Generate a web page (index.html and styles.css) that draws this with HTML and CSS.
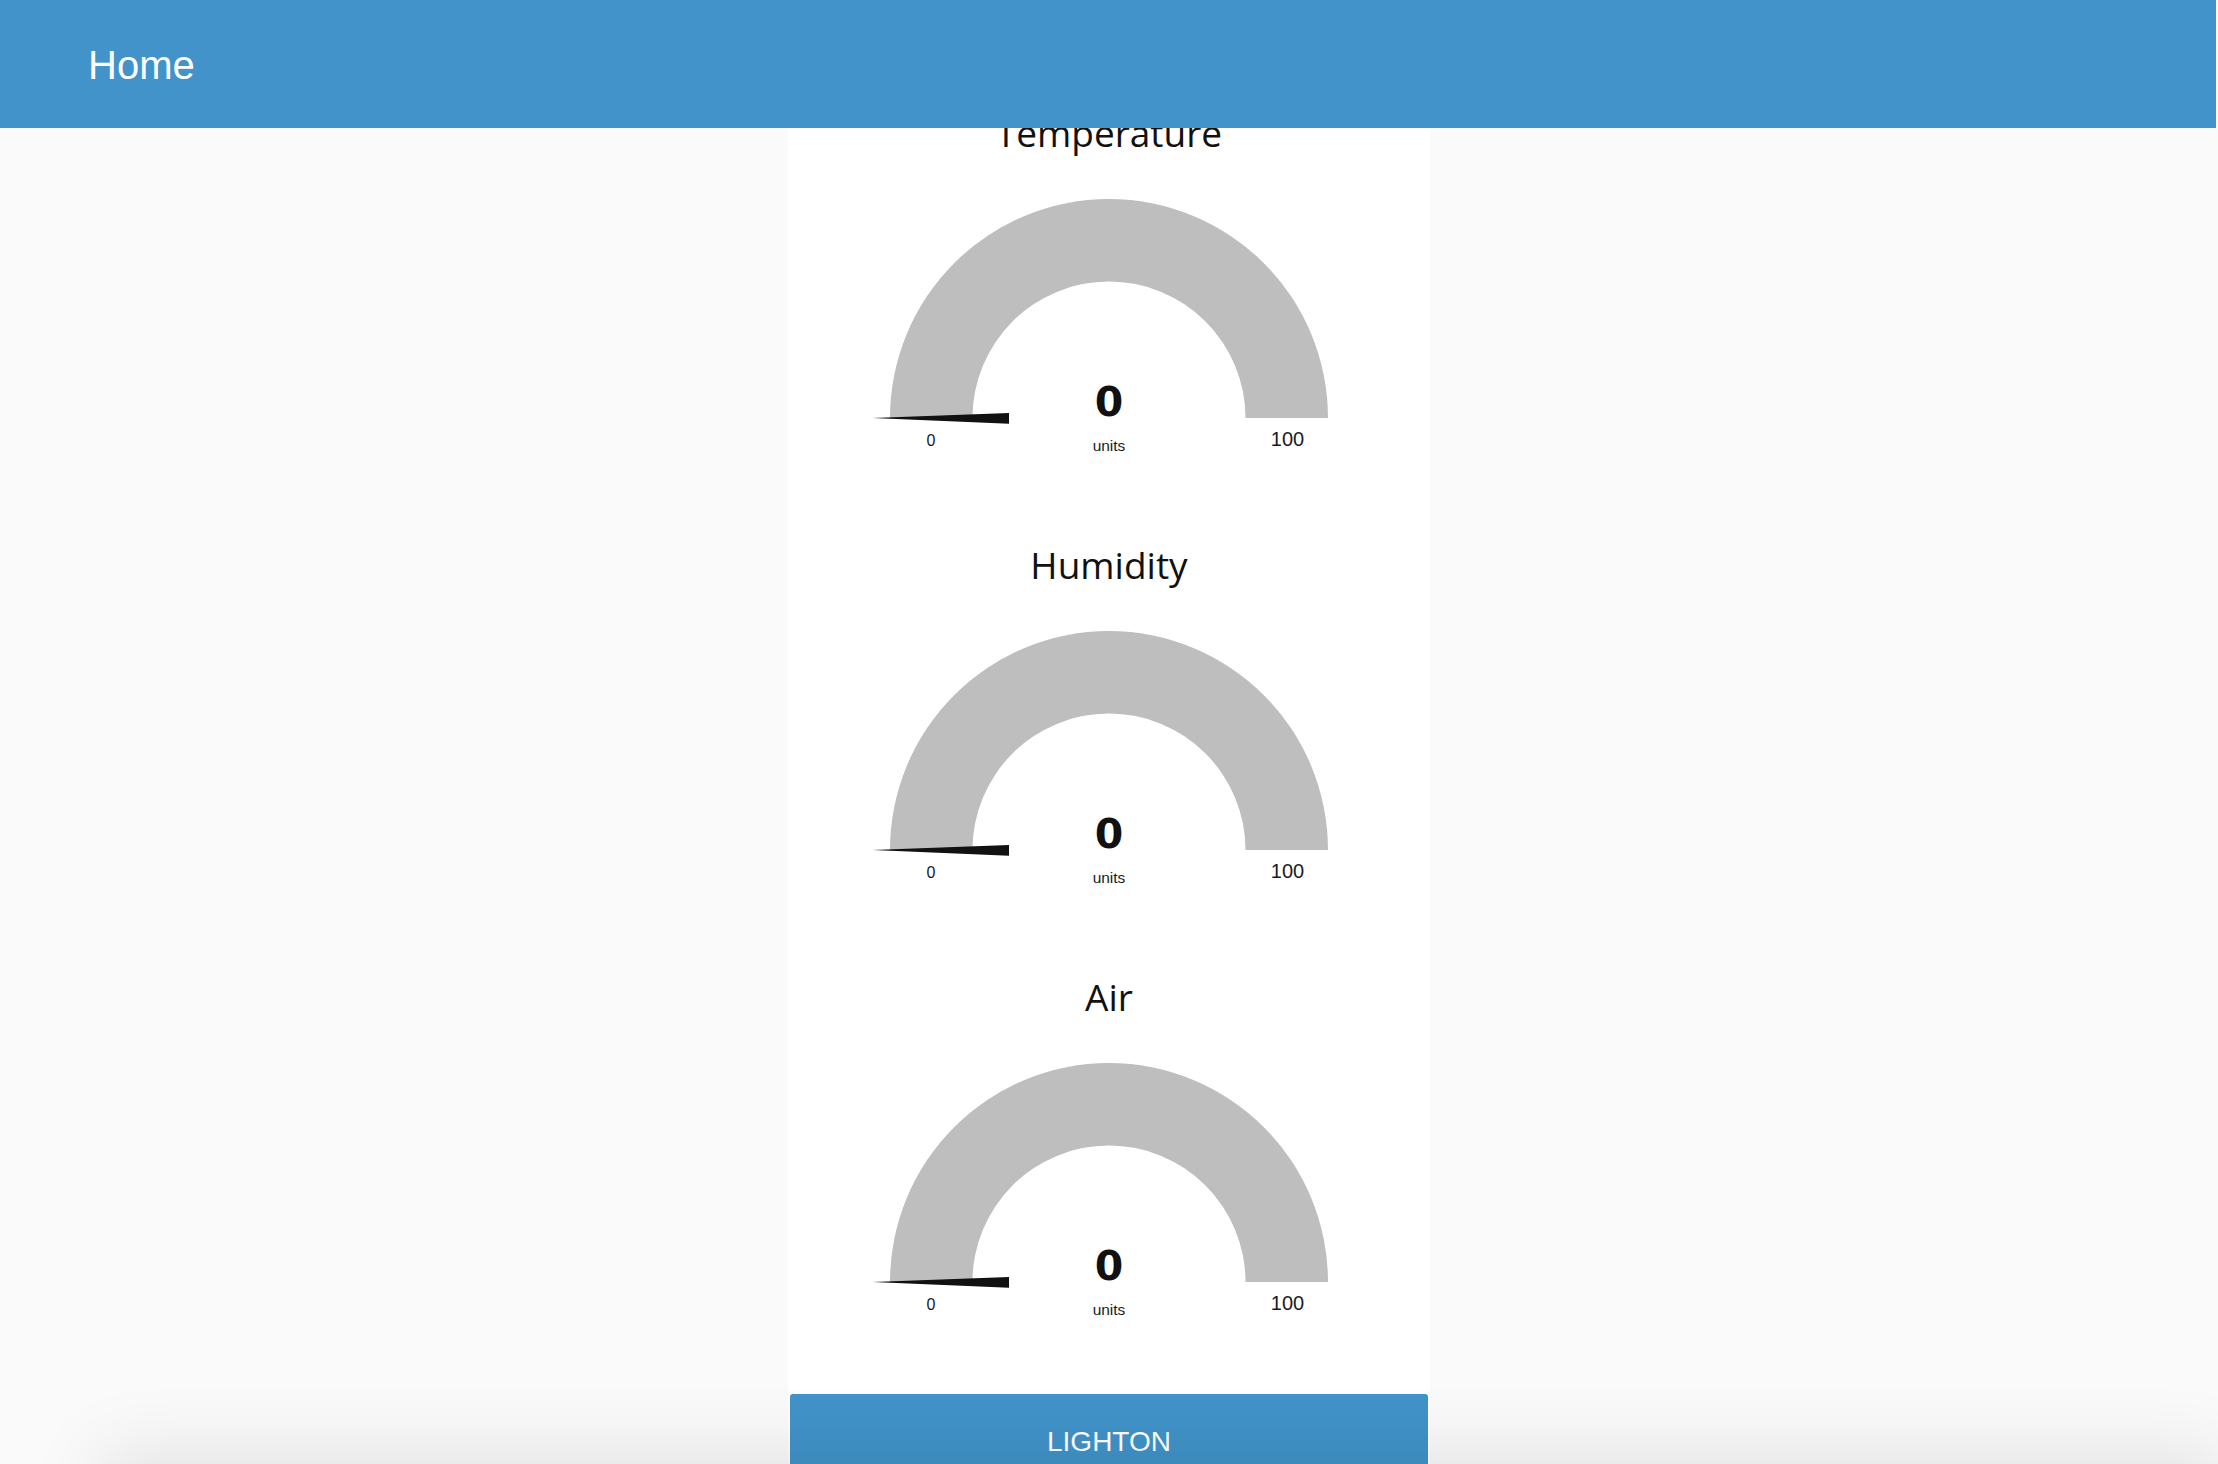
FILE: index.html
```html
<!DOCTYPE html>
<html>
<head>
<meta charset="utf-8">
<title>Home</title>
<link rel="stylesheet" href="styles.css">
</head>
<body>
<header class="topbar">
  <span class="topbar-title">Home</span>
</header>
<main class="page">
  <section class="card">
    <div class="widget">
      <div class="widget-title">Temperature</div>
      <svg class="gauge" viewBox="0 0 640 372" width="640" height="372">
        <path class="gauge-arc" d="M101 260 A219 219 0 0 1 539 260 L456.5 260 A136.5 136.5 0 0 0 183.5 260 Z"/>
        <polygon class="gauge-needle" points="83.5,260 220,255 220,265.7"/>
        <text class="gauge-value" x="320" y="257.5" text-anchor="middle">0</text>
        <text class="gauge-units" x="320" y="292.7" text-anchor="middle">units</text>
        <text class="gauge-min" x="142" y="287.7" text-anchor="middle">0</text>
        <text class="gauge-max" x="498.5" y="288" text-anchor="middle">100</text>
      </svg>
    </div>
    <div class="widget">
      <div class="widget-title">Humidity</div>
      <svg class="gauge" viewBox="0 0 640 372" width="640" height="372">
        <path class="gauge-arc" d="M101 260 A219 219 0 0 1 539 260 L456.5 260 A136.5 136.5 0 0 0 183.5 260 Z"/>
        <polygon class="gauge-needle" points="83.5,260 220,255 220,265.7"/>
        <text class="gauge-value" x="320" y="257.5" text-anchor="middle">0</text>
        <text class="gauge-units" x="320" y="292.7" text-anchor="middle">units</text>
        <text class="gauge-min" x="142" y="287.7" text-anchor="middle">0</text>
        <text class="gauge-max" x="498.5" y="288" text-anchor="middle">100</text>
      </svg>
    </div>
    <div class="widget">
      <div class="widget-title">Air</div>
      <svg class="gauge" viewBox="0 0 640 372" width="640" height="372">
        <path class="gauge-arc" d="M101 260 A219 219 0 0 1 539 260 L456.5 260 A136.5 136.5 0 0 0 183.5 260 Z"/>
        <polygon class="gauge-needle" points="83.5,260 220,255 220,265.7"/>
        <text class="gauge-value" x="320" y="257.5" text-anchor="middle">0</text>
        <text class="gauge-units" x="320" y="292.7" text-anchor="middle">units</text>
        <text class="gauge-min" x="142" y="287.7" text-anchor="middle">0</text>
        <text class="gauge-max" x="498.5" y="288" text-anchor="middle">100</text>
      </svg>
    </div>
    <button class="action-button" type="button">LIGHTON</button>
  </section>
</main>
<div class="bottom-shadow"></div>
</body>
</html>
```

FILE: styles.css
```css
html, body {
  margin: 0;
  padding: 0;
  background: #fafafa;
  overflow: hidden;
  height: 100%;
}

body {
  font-family: "Liberation Sans", Arial, sans-serif;
  color: #111;
}

.topbar {
  position: fixed;
  top: 0;
  left: 0;
  right: 2px;
  height: 128px;
  background: #4193c9;
  display: flex;
  align-items: center;
  padding: 3px 0 0 88px;
  box-sizing: border-box;
  z-index: 10;
}

.topbar-title {
  color: #fff;
  font-size: 40px;
  font-family: "Liberation Sans", Arial, sans-serif;
}

.page {
  padding-top: 90px;
  display: flex;
  justify-content: center;
}

.card {
  width: 642px;
  background: #fff;
  padding: 8px 0 0;
  display: flex;
  flex-direction: column;
  align-items: stretch;
  min-height: 1500px;
  box-sizing: border-box;
}

.widget {
  height: 432px;
  padding-top: 10px;
  box-sizing: border-box;
  display: flex;
  flex-direction: column;
  align-items: center;
}

.widget-title {
  height: 50px;
  line-height: 50px;
  font-family: "Open Sans", "Noto Sans", sans-serif;
  font-size: 37px;
  color: #111;
  text-align: center;
  white-space: nowrap;
}

.gauge {
  display: block;
  width: 640px;
  height: 372px;
}

.gauge-arc {
  fill: #bebebe;
}

.gauge-needle {
  fill: #111;
}

.gauge-value {
  font-family: "DejaVu Sans", sans-serif;
  font-weight: bold;
  font-size: 41px;
  fill: #111;
}

.gauge-units {
  font-family: "Liberation Sans", Arial, sans-serif;
  font-size: 15.5px;
  fill: #1a1a1a;
}

.gauge-min {
  font-family: "Liberation Sans", Arial, sans-serif;
  font-size: 16px;
  fill: #1a1a1a;
}

.gauge-max {
  font-family: "Liberation Sans", Arial, sans-serif;
  font-size: 20px;
  fill: #1a1a1a;
}

.action-button {
  margin: 0 2px;
  height: 96px;
  border: none;
  border-radius: 3px;
  background: #4193c9;
  color: #fff;
  font-family: "Liberation Sans", Arial, sans-serif;
  font-size: 28px;
  line-height: 96px;
  padding: 0;
  text-align: center;
}

.bottom-shadow {
  position: fixed;
  left: 110px;
  right: 0;
  top: 100%;
  height: 200px;
  box-shadow: 0 0 70px 10px rgba(0, 0, 0, 0.10);
  z-index: 5;
}
```
